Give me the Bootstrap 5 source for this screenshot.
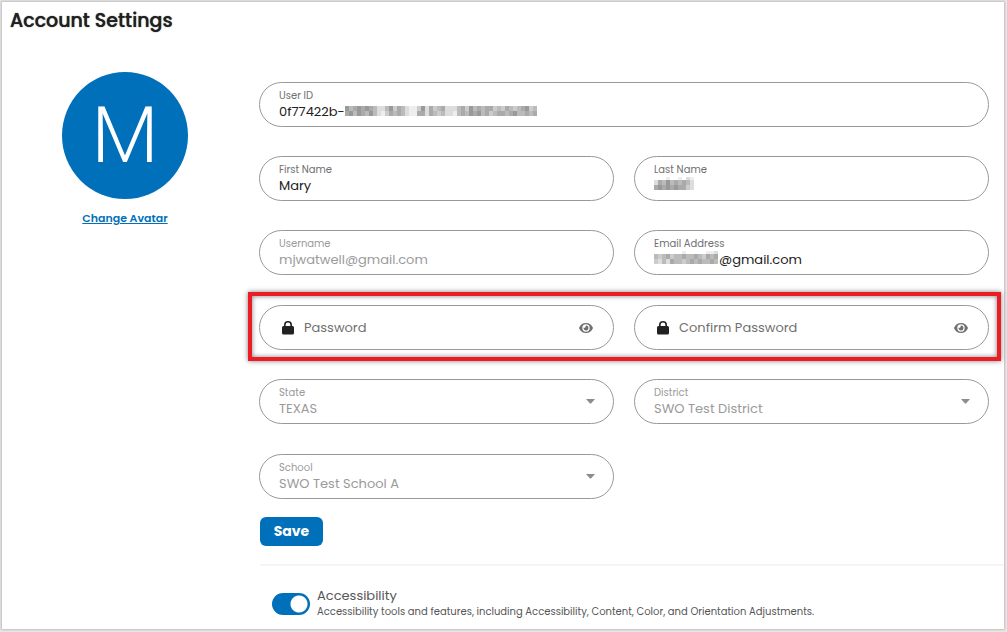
<!DOCTYPE html>
<html lang="en">
<head>
<meta charset="utf-8">
<meta name="viewport" content="width=device-width, initial-scale=1">
<title>Account Settings</title>
<link href="https://cdn.jsdelivr.net/npm/bootstrap@5.3.0/dist/css/bootstrap.min.css" rel="stylesheet">
<style>
  body { font-family: Poppins, Inter, sans-serif; background: #e9e9e9; color: #212121; font-size: 13px; }
  .sheet { background: #fff; margin: 2px 3px 3px 2px; min-height: calc(100vh - 5px); box-shadow: 0 0 2px 1px #bdbdbd; padding-top: 6px; }
  .page-title { font-size: 19px; line-height: 26px; font-weight: 500; text-shadow: 0 0 1px #212121; padding-left: 8px; margin: 0; }
  .profile { width: 246px; padding-top: 38px; }
  .avatar { width: 126px; height: 127px; background: #0070ba; color: #fff; font: 300 78px/127px Roboto, sans-serif; }
  .avatar-link { font-size: 11px; line-height: 18px; font-weight: 600; color: #0070ba; margin-top: 10px; }
  .settings { min-width: 0; padding-top: 48px; }
  .fields { padding: 0 15px 0 11px; }
  .pair { --bs-gutter-x: 20px; --bs-gutter-y: 29px; }
  .pair-wide { --bs-gutter-y: 30px; }
  .field { height: 45px; border: 1px solid #999; border-radius: 23px; padding: 5px 19px 0; position: relative; background: #fff; }
  .field label { display: block; font-size: 10px; line-height: 15px; color: #707070; }
  .field input, .field select { display: block; border: 0; padding: 0; margin: 0; background: none; width: 100%; min-width: 0; height: 17px; line-height: 17px; font-size: 13px; color: #212121; outline: 0; appearance: none; opacity: 1; }
  .field.off label, .field.off input, .field.off select { color: #9a9a9a; }
  .field input.id-start { width: 66px; }
  .caret { position: absolute; right: 18px; top: 19px; }
  .mosaic { flex: none; height: 14px; }
  .callout-box { border: 4px solid #ec1c24; margin: 17px 3px 18px 0; padding: 9px 8px 7px 7px; box-shadow: 0 0 5px rgba(0,0,0,.5), inset 0 0 5px rgba(0,0,0,.5); }
  .field.secret { padding: 0 20px 0 22px; display: flex; align-items: center; }
  .field.secret input { height: 20px; margin-left: 10px; }
  .field input::placeholder { color: #707070; opacity: 1; }
  .peek { border: 0; background: none; padding: 0; display: flex; }
  .save { background: #0070ba; color: #fff; font-size: 14px; line-height: 19px; font-weight: 700; border: 0; border-radius: 6px; padding: 5px 13px; margin: 18px 0 0 12px; width: 63px; }
  .save:hover { background: #005f9e; color: #fff; }
  .rule { border-top: 2px solid #f5f5f5; margin: 18px 0 0 12px; }
  .access { padding: 21px 15px 6px 24px; gap: 7px; }
  .access .form-check-input { width: 38px; height: 22px; margin: 6px 0 0; flex: none; border: 0; border-radius: 11px; background: #0070ba radial-gradient(circle at 27px 11px, #fff 8px, transparent 9px) no-repeat; box-shadow: none; }
  .access label { display: block; line-height: 17px; color: #555; font-size: 13px; }
  .access p { font-size: 10px; line-height: 16px; color: #555; margin: 0; }
</style>
</head>
<body>
<svg class="d-none" xmlns="http://www.w3.org/2000/svg">
  <symbol id="lock" viewBox="0 0 12 14"><path fill="#212121" d="M1.5 5H2V4a4 4 0 0 1 8 0v1h.5A1.5 1.5 0 0 1 12 6.500v5.500a1.500 1.500 0 0 1-1.500 1.500h-9A1.500 1.500 0 0 1 0 12V6.500A1.500 1.500 0 0 1 1.500 5ZM3.600 5h4.800V4a2.400 2.400 0 0 0-4.800 0Z"/></symbol>
  <symbol id="eye" viewBox="0 0 14 10"><path fill="#707070" fill-rule="evenodd" d="M7 0C3.700 0 1.300 2 .2 4.500a1.200 1.200 0 0 0 0 1C1.300 8 3.700 10 7 10s5.700-2 6.800-4.500a1.200 1.200 0 0 0 0-1C12.700 2 10.300 0 7 0Zm0 1.300a3.700 3.700 0 1 1 0 7.400 3.700 3.700 0 0 1 0-7.400Z"/><path fill="#707070" d="M7 2.600A2.400 2.400 0 1 1 4.700 4.500c.3.200.7.300 1.100.2.600-.2 1-.9.800-1.500C6.500 2.900 6.700 2.600 7 2.600Z"/></symbol>
  <symbol id="down" viewBox="0 0 9 5"><path fill="#8c8c8c" d="M0 0h9L5 4.500H4Z"/></symbol>
</svg>

<main class="sheet">
  <h1 class="page-title">Account Settings</h1>
  <div class="d-flex">
    <aside class="profile flex-shrink-0 d-flex flex-column align-items-center">
      <div class="avatar rounded-circle text-center">M</div>
      <a class="avatar-link" href="#">Change Avatar</a>
    </aside>

    <form class="settings flex-grow-1" onsubmit="return false">
      <div class="fields">
        <div class="row pair">
          <div class="col-12"><div class="field">
            <label for="uid">User ID</label>
            <div class="d-flex align-items-start"><input id="uid" class="id-start" value="0f77422b-" readonly><svg class="mosaic" width="196" aria-hidden="true" data-rows="ffffffffffffffffffffffffffffffffffffffffffffffff 9ba9a9abddb9cabdeec9dacbadddbac9babaacbcabcba9cb a9b9ab9bdecababdeeaadabcbddebab9a9bacbaaba9bbaba"></svg></div>
          </div></div>
          <div class="col-6"><div class="field">
            <label for="first">First Name</label><input id="first" value="Mary">
          </div></div>
          <div class="col-6"><div class="field">
            <label for="last">Last Name</label>
            <div class="d-flex align-items-start"><svg class="mosaic" width="40" aria-hidden="true" data-rows="fffeffefde dab9bababd a9a9a9aacd"></svg><input id="last" value=""></div>
          </div></div>
          <div class="col-6"><div class="field off">
            <label for="user">Username</label><input id="user" value="mjwatwell@gmail.com" disabled>
          </div></div>
          <div class="col-6"><div class="field">
            <label for="mail">Email Address</label>
            <div class="d-flex align-items-start"><svg class="mosaic" width="65" aria-hidden="true" data-rows="fffffffefffffeed bcbacbbabbabcaba cdbdabbcbababbab"></svg><input id="mail" value="@gmail.com"></div>
          </div></div>
        </div>
      </div>

      <div class="callout-box">
        <div class="row pair">
          <div class="col-6"><div class="field secret">
            <svg class="flex-shrink-0" width="12" height="14" aria-hidden="true"><use href="#lock"/></svg>
            <input type="password" placeholder="Password" aria-label="Password">
            <button class="peek" type="button" aria-label="Show password"><svg width="14" height="10"><use href="#eye"/></svg></button>
          </div></div>
          <div class="col-6"><div class="field secret">
            <svg class="flex-shrink-0" width="12" height="14" aria-hidden="true"><use href="#lock"/></svg>
            <input type="password" placeholder="Confirm Password" aria-label="Confirm Password">
            <button class="peek" type="button" aria-label="Show confirmed password"><svg width="14" height="10"><use href="#eye"/></svg></button>
          </div></div>
        </div>
      </div>

      <div class="fields">
        <div class="row pair pair-wide">
          <div class="col-6"><div class="field off">
            <label for="state">State</label><select id="state" disabled><option>TEXAS</option></select>
            <svg class="caret" width="9" height="5" aria-hidden="true"><use href="#down"/></svg>
          </div></div>
          <div class="col-6"><div class="field off">
            <label for="district">District</label><select id="district" disabled><option>SWO Test District</option></select>
            <svg class="caret" width="9" height="5" aria-hidden="true"><use href="#down"/></svg>
          </div></div>
          <div class="col-6"><div class="field off">
            <label for="school">School</label><select id="school" disabled><option>SWO Test School A</option></select>
            <svg class="caret" width="9" height="5" aria-hidden="true"><use href="#down"/></svg>
          </div></div>
        </div>
      </div>

      <button class="btn save d-block" type="submit">Save</button>
      <div class="rule"></div>

      <div class="access d-flex form-switch">
        <input class="form-check-input" type="checkbox" role="switch" id="access" checked>
        <div>
          <label for="access">Accessibility</label>
          <p>Accessibility tools and features, including Accessibility, Content, Color, and Orientation Adjustments.</p>
        </div>
      </div>
    </form>
  </div>
</main>

<script src="https://cdn.jsdelivr.net/npm/bootstrap@5.3.0/dist/js/bootstrap.bundle.min.js"></script>
<script>
  // Redacted parts of a value: each hex digit is the grey of one block.
  document.querySelectorAll('.mosaic').forEach(svg => {
    svg.innerHTML = svg.dataset.rows.split(' ').map((row, y) =>
      [...row].map((c, x) => c === 'f' ? '' :
        `<rect x="${x * 4}" y="${[0, 3, 8][y]}" width="4" height="${y ? 5 : 3}" fill="#${c.repeat(6)}"/>`).join('')).join('');
  });
</script>
</body>
</html>
